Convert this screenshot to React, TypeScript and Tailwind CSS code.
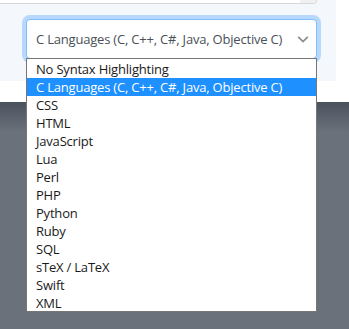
const languages = [
  'No Syntax Highlighting',
  'C Languages (C, C++, C#, Java, Objective C)',
  'CSS',
  'HTML',
  'JavaScript',
  'Lua',
  'Perl',
  'PHP',
  'Python',
  'Ruby',
  'SQL',
  'sTeX / LaTeX',
  'Swift',
  'XML',
];

const selected = 1;

export default function App() {
  return (
    <div className="relative flex flex-col w-[349px] h-[329px] overflow-hidden bg-white font-['Open_Sans',sans-serif] text-[13px] tracking-[-0.2px]">
      {/* Top panel */}
      <div className="flex h-[81px]">
        <div className="w-[336px] bg-[#f4f7fb] flex flex-col">
          {/* bottom of the editor textarea above */}
          <div className="flex h-[4px] w-[317px] border-b border-r border-[#d4d8dc] rounded-br-[4px] bg-white overflow-hidden">
            <div className="flex-1" />
            <div className="w-[16px] bg-[#f0f0f0]" />
          </div>

          {/* select, focused */}
          <div className="ml-[26px] mt-[15px] w-[291px] h-[40px] flex items-center justify-between pl-[9px] pr-[6px] bg-white border border-[#80bdff] rounded-[4px] shadow-[0_0_0_4px_rgba(0,123,255,0.25)] text-[#495057]">
            <span className="whitespace-nowrap pt-[1px]">{languages[selected]}</span>
            <svg width="14" height="14" viewBox="0 0 16 16" className="text-[#8c8c8c] shrink-0">
              <path d="M2.5 5.5 L8 11 L13.5 5.5" fill="none" stroke="currentColor" strokeWidth="2" />
            </svg>
          </div>
        </div>
        <div className="flex-1 bg-white" />
      </div>

      {/* white gap */}
      <div className="h-[21px] bg-white" />

      {/* dark page area */}
      <div className="flex-1 bg-[linear-gradient(to_bottom,#4a525e,#6b717b_30px,#6b717b)]" />

      {/* open dropdown list */}
      <ul className="absolute left-[26px] top-[58px] w-[291px] h-[254px] pt-[1px] bg-white border border-[#767676] overflow-hidden text-[#1a1a1a]">
        {languages.map((lang, i) => (
          <li
            key={i}
            className={
              i === selected
                ? 'h-[18px] leading-[18px] pl-[9px] whitespace-nowrap bg-[#1e90ff] text-white'
                : 'h-[18px] leading-[18px] pl-[9px] whitespace-nowrap'
            }
          >
            {lang}
          </li>
        ))}
      </ul>
    </div>
  );
}
